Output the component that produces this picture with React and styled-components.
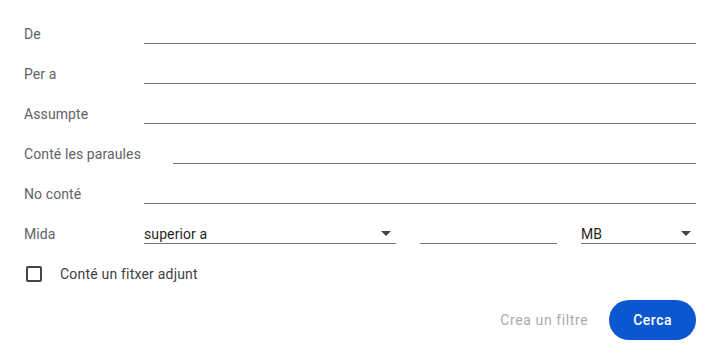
import React from "react";
import styled, { createGlobalStyle } from "styled-components";

const GlobalStyle = createGlobalStyle`
  body {
    margin: 0;
    background: #fff;
    font-family: Roboto, "Liberation Sans", Arial, sans-serif;
  }
`;

const Form = styled.div`
  width: 720px;
  height: 360px;
  box-sizing: border-box;
  padding: 14px 24px 0 24px;
  display: flex;
  flex-direction: column;
`;

const Row = styled.div`
  display: flex;
  align-items: center;
  height: 40px;
`;

const Label = styled.div`
  min-width: 120px;
  box-sizing: border-box;
  padding-right: 32px;
  font-size: 14px;
  letter-spacing: 0.1px;
  color: #5f6368;
  white-space: nowrap;
`;

const Field = styled.div`
  flex: ${(p) => (p.$width ? "none" : "1")};
  width: ${(p) => (p.$width ? `${p.$width}px` : "auto")};
  height: 20px;
  box-sizing: border-box;
  border-bottom: 1px solid #747775;
  display: flex;
  align-items: center;
  font-size: 14px;
  color: #1f1f1f;
`;

const SizeGroup = styled.div`
  flex: 1;
  display: flex;
  gap: 24px;
  align-items: center;
`;

const SelectText = styled.span`
  flex: 1;
  line-height: 18px;
  letter-spacing: 0.1px;
`;

const Arrow = styled.span`
  width: 0;
  height: 0;
  border-left: 5px solid transparent;
  border-right: 5px solid transparent;
  border-top: 5px solid #444746;
  margin-right: 5px;
`;

const Box = styled.span`
  width: 16px;
  height: 16px;
  box-sizing: border-box;
  border: 2px solid #444746;
  border-radius: 2px;
  margin-left: 2px;
  margin-right: 18px;
`;

const CheckLabel = styled.span`
  font-size: 14px;
  letter-spacing: 0.2px;
  color: #3c4043;
`;

const Actions = styled.div`
  display: flex;
  justify-content: flex-end;
  align-items: center;
  gap: 21px;
  margin-top: 6px;
`;

const TextButton = styled.span`
  font-size: 14px;
  font-weight: 400;
  letter-spacing: 0.6px;
  color: #a8abae;
`;

const PrimaryButton = styled.button`
  height: 40px;
  padding: 0 24px;
  border: none;
  border-radius: 20px;
  background: #0b57d0;
  color: #fff;
  font-family: inherit;
  font-size: 14px;
  font-weight: 500;
  letter-spacing: 0.5px;
`;

function TextRow({ label }) {
  return (
    <Row>
      <Label>{label}</Label>
      <Field />
    </Row>
  );
}

export default function App() {
  return (
    <>
      <GlobalStyle />
      <Form>
        <TextRow label="De" />
        <TextRow label="Per a" />
        <TextRow label="Assumpte" />
        <TextRow label="Conté les paraules" />
        <TextRow label="No conté" />
        <Row>
          <Label>Mida</Label>
          <SizeGroup>
            <Field $width={252}>
              <SelectText>superior a</SelectText>
              <Arrow />
            </Field>
            <Field $width={137} />
            <Field>
              <SelectText>MB</SelectText>
              <Arrow />
            </Field>
          </SizeGroup>
        </Row>
        <Row>
          <Box />
          <CheckLabel>Conté un fitxer adjunt</CheckLabel>
        </Row>
        <Actions>
          <TextButton>Crea un filtre</TextButton>
          <PrimaryButton>Cerca</PrimaryButton>
        </Actions>
      </Form>
    </>
  );
}
